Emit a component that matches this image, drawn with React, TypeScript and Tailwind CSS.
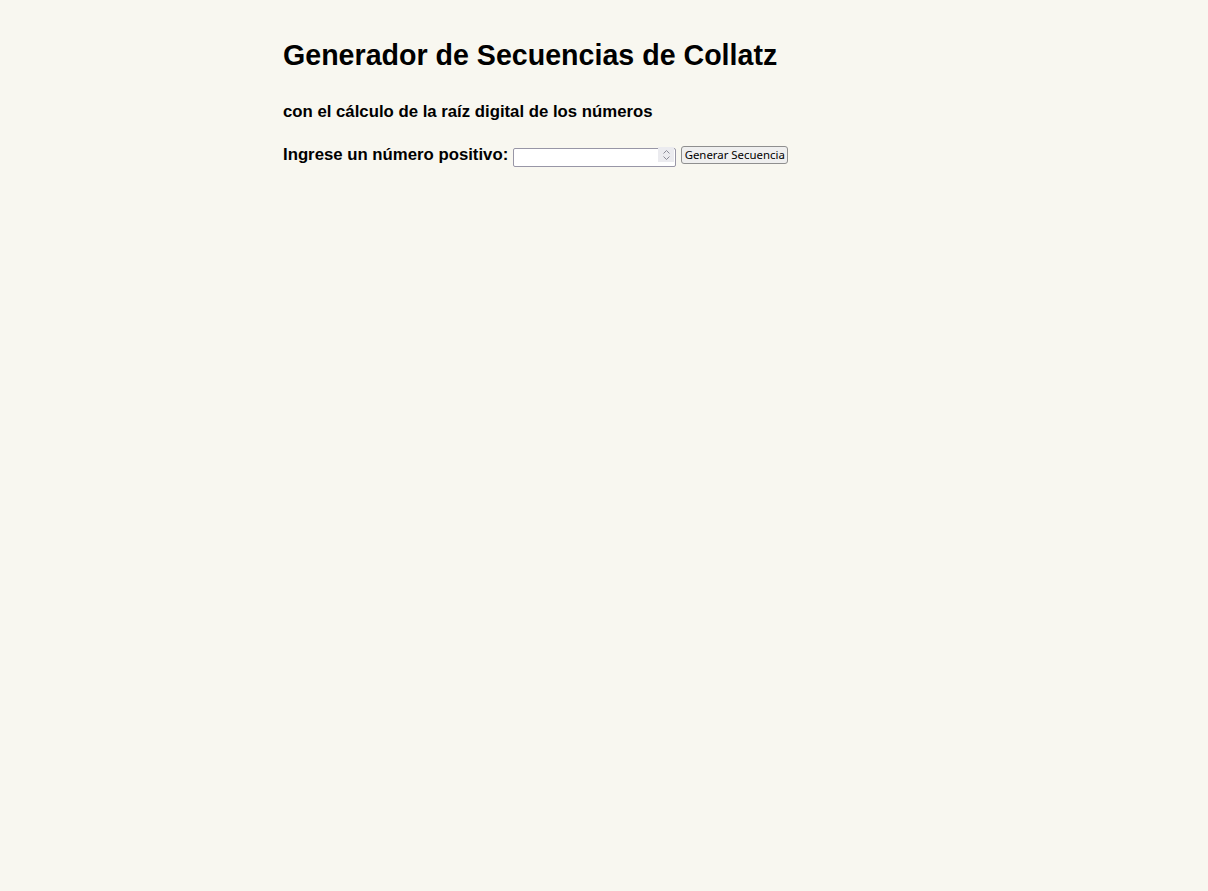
import { useState } from "react";

export default function App() {
  const [value, setValue] = useState("");

  return (
    <div className="min-h-[891px] bg-[#f8f7f0] text-black font-['Liberation_Sans',Arial,sans-serif]">
      <div className="mx-auto w-[642px] pt-[39px]">
        <h1 className="text-[28.6px] font-bold leading-[33px]">
          Generador de Secuencias de Collatz
        </h1>
        <h3 className="text-[16.75px] font-bold leading-[19px] mt-[30px]">
          con el cálculo de la raíz digital de los números
        </h3>
        <div className="mt-[24px] flex items-center h-[19px]">
          <label className="text-[16.75px] font-bold leading-[19px]" htmlFor="num">
            Ingrese un número positivo:
          </label>
          {/* number input with always-visible spinner */}
          <div className="relative ml-[5px] w-[163px] h-[19px]">
            <input
              id="num"
              type="number"
              min={1}
              value={value}
              onChange={(e) => setValue(e.target.value)}
              className="w-full h-full bg-white border border-[#9896a6] rounded-[2px] pl-[3px] pr-[20px] text-[12px] font-['Noto_Sans',sans-serif] outline-none [appearance:textfield] [&::-webkit-inner-spin-button]:appearance-none [&::-webkit-outer-spin-button]:appearance-none"
            />
            <div className="pointer-events-none absolute right-[2px] top-[2px] bottom-[2px] w-[16px] bg-[#ebebef] flex flex-col items-center justify-center gap-[2px]">
              <svg width="7" height="4" viewBox="0 0 7 4">
                <path d="M0.5 3.5 L3.5 0.5 L6.5 3.5" fill="none" stroke="#8a8a96" strokeWidth="1" />
              </svg>
              <svg width="7" height="4" viewBox="0 0 7 4">
                <path d="M0.5 0.5 L3.5 3.5 L6.5 0.5" fill="none" stroke="#8a8a96" strokeWidth="1" />
              </svg>
            </div>
          </div>
          <button
            type="button"
            className="ml-[5px] h-[18px] w-[107px] bg-[#efefef] border border-[#8f8f8f] rounded-[3px] text-[11.4px] leading-[14px] font-['Noto_Sans',sans-serif] text-black"
          >
            Generar Secuencia
          </button>
        </div>
      </div>
    </div>
  );
}
